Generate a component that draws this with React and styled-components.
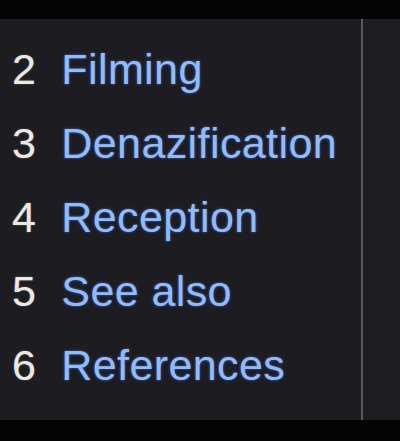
import React from "react";
import styled, { createGlobalStyle } from "styled-components";

const GlobalStyle = createGlobalStyle`
  html, body {
    margin: 0;
    padding: 0;
    background: #050506;
    font-family: "Liberation Sans", Arial, sans-serif;
  }
`;

const sections = [
  { num: 2, title: "Filming" },
  { num: 3, title: "Denazification" },
  { num: 4, title: "Reception" },
  { num: 5, title: "See also" },
  { num: 6, title: "References" },
];

export default function App() {
  return (
    <>
      <GlobalStyle />
      <Screen>
        <TopBar />
        <Main>
          <TocPanel>
            <TocList>
              {sections.map((s) => (
                <TocItem key={s.num}>
                  <Num>{s.num}</Num>
                  <Link>{s.title}</Link>
                </TocItem>
              ))}
            </TocList>
          </TocPanel>
          <Divider />
          <SidePanel />
        </Main>
        <BottomBar />
      </Screen>
    </>
  );
}

const Screen = styled.div`
  width: 400px;
  height: 441px;
  display: flex;
  flex-direction: column;
  overflow: hidden;
`;

const TopBar = styled.div`
  height: 19px;
  background: #040405;
`;

const BottomBar = styled.div`
  height: 21px;
  background: #040405;
`;

const Main = styled.div`
  flex: 1;
  display: flex;
  background: #1d1c20;
`;

const TocPanel = styled.div`
  width: 361px;
  padding-top: 13px;
`;

const Divider = styled.div`
  width: 2px;
  background: #5a595e;
`;

const SidePanel = styled.div`
  flex: 1;
  background: #1e1d21;
`;

const TocList = styled.ul`
  list-style: none;
  margin: 0;
  padding: 0 0 0 12px;
`;

const TocItem = styled.li`
  display: flex;
  align-items: baseline;
  gap: 25px;
  font-size: 43px;
  letter-spacing: 0.4px;
  line-height: 74px;
  white-space: nowrap;
`;

const Num = styled.span`
  color: #ece9e4;
  text-shadow: 0 0 2px rgba(255, 255, 255, 0.35);
`;

const Link = styled.span`
  color: #93bbf7;
  text-shadow: 0 0 3px rgba(70, 130, 255, 0.7);
`;
